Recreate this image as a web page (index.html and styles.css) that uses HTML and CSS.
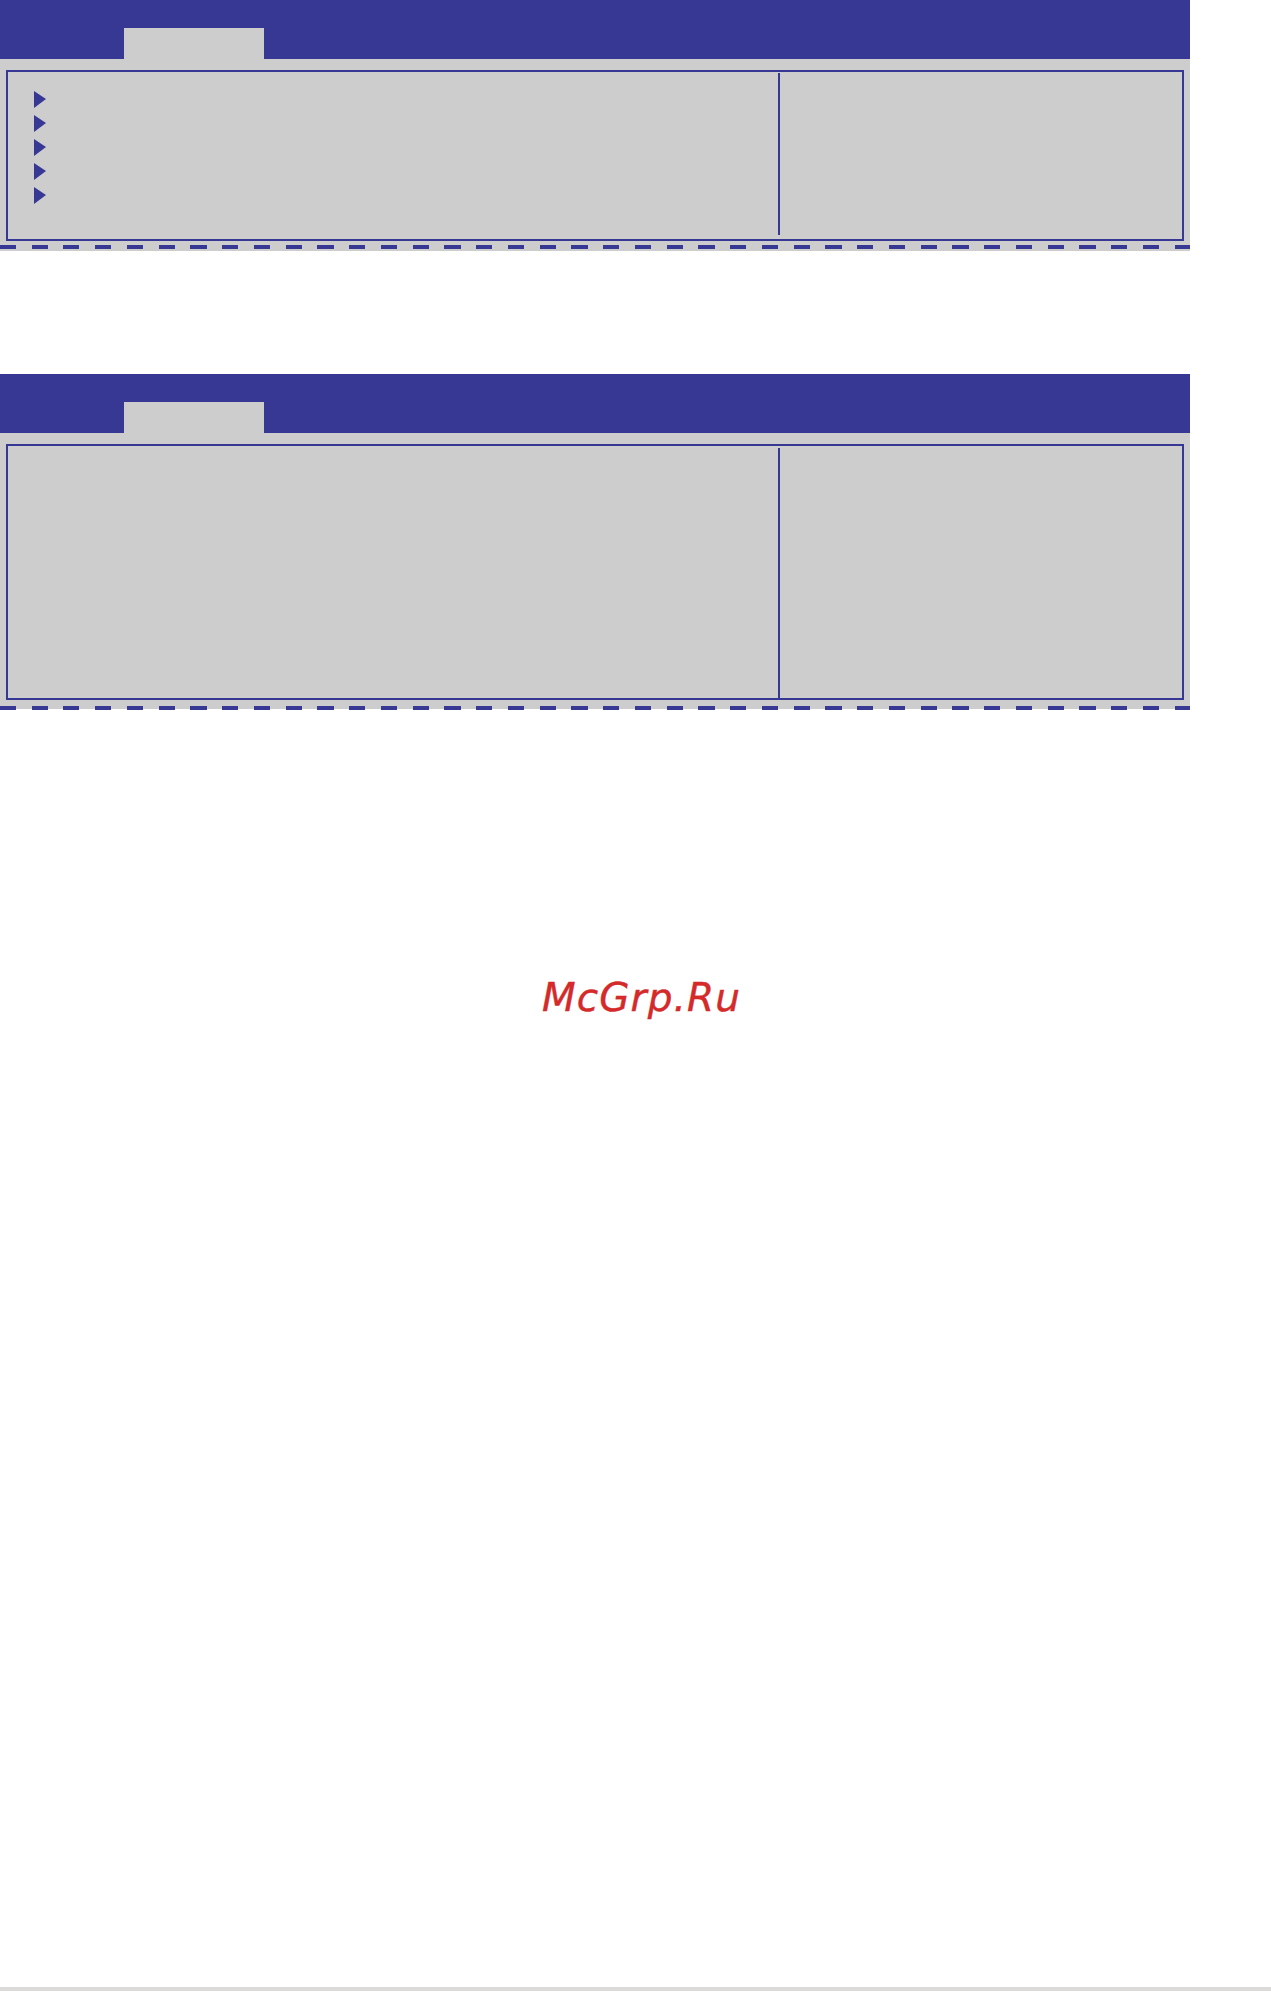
FILE: index.html
```html
<!DOCTYPE html>
<html lang="ru">

<head>
    <meta charset="UTF-8" />
    <meta name="viewport" content="width=device-width, initial-scale=1.0" />
    <title>BIOS</title>
    <link rel="stylesheet" href="styles.css">
</head>

<body>
    <!-- first screen: menu with submenu items -->
    <section class="panel">
        <div class="panel-head">
            <div class="tab"></div>
        </div>
        <div class="panel-body">
            <div class="frame frame-menu">
                <ul class="items">
                    <li class="arrow"></li>
                    <li class="arrow"></li>
                    <li class="arrow"></li>
                    <li class="arrow"></li>
                    <li class="arrow"></li>
                </ul>
                <div class="divider"></div>
                <div class="help"></div>
            </div>
            <div class="dashes"></div>
        </div>
    </section>

    <!-- second screen: empty settings page -->
    <section class="panel panel-second">
        <div class="panel-head">
            <div class="tab"></div>
        </div>
        <div class="panel-body">
            <div class="frame frame-settings">
                <div class="items"></div>
                <div class="divider"></div>
                <div class="help"></div>
            </div>
            <div class="dashes"></div>
        </div>
    </section>

    <div class="mark">
        <span>McGrp.Ru</span>
    </div>

    <footer class="bottom-line"></footer>
</body>

</html>
```

FILE: styles.css
```css
* {
    margin: 0;
    padding: 0;
    box-sizing: border-box;
}

body {
    font-family: 'DejaVu Sans', sans-serif;
    background-color: #ffffff;
    min-height: 100vh;
    display: flex;
    flex-direction: column;
}

.panel {
    width: 1190px;
}

.panel-second {
    margin-top: 123px;
}

.panel-head {
    height: 59px;
    background-color: #373893;
    padding-top: 28px;
    padding-left: 124px;
}

.tab {
    width: 140px;
    height: 31px;
    background-color: #cdcdcd;
}

.panel-body {
    background-color: #cdcdcd;
    padding: 11px 6px 2px 6px;
}

.frame {
    border: 2px solid #373893;
    display: grid;
    grid-template-columns: 770px 2px 1fr;
}

.frame-menu {
    height: 171px;
}

.frame-settings {
    height: 256px;
}

.items {
    list-style: none;
    padding: 19px 0 0 26px;
    display: flex;
    flex-direction: column;
    gap: 7px;
}

.arrow {
    width: 0;
    height: 0;
    border-left: 12px solid #373893;
    border-top: 8px solid transparent;
    border-bottom: 9px solid transparent;
}

.divider {
    background-color: #373893;
}

.frame-menu .divider {
    margin: 1px 0 4px 0;
}

.frame-settings .divider {
    margin-top: 2px;
}

.dashes {
    height: 4px;
    margin: 4px -6px 0 -6px;
    background: repeating-linear-gradient(to right, #373893 0 16px, transparent 16px 31.75px);
}

.panel-second .dashes {
    margin-top: 6px;
    margin-bottom: -3px;
}

.mark {
    padding-top: 269px;
    padding-left: 542px;
}

.mark span {
    font-family: 'DejaVu Sans', sans-serif;
    font-style: italic;
    font-size: 39px;
    letter-spacing: 1.1px;
    color: #d42a2a;
    line-height: 1;
    -webkit-text-stroke: 0.4px #d42a2a;
}

.bottom-line {
    margin-top: auto;
    height: 4px;
    background-color: #dcdad8;
}
```
